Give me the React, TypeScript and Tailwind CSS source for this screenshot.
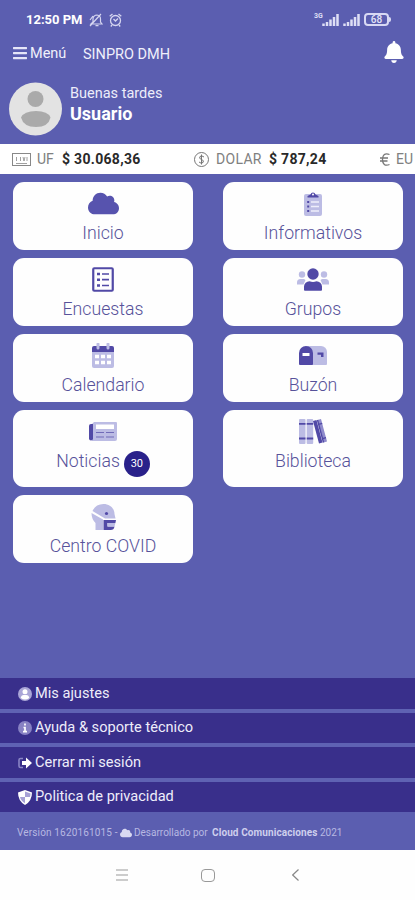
import React from "react";

import { FaBars, FaBell, FaCloud } from "react-icons/fa";

const DARK = "#5149a6";
const LIGHT = "#bcbce4";

const ClipboardIcon = () => (
  <svg width="18" height="25" viewBox="0 0 18 25">
    <rect x="0" y="3" width="18" height="22" rx="2" fill={LIGHT} />
    <path d="M3.500 6.500V5L6.500 3.500a2.600 2.600 0 0 1 5 0L14.500 5v1.500z" fill={DARK} />
    <circle cx="9" cy="3.400" r="1" fill="#fff" />
    <path d="M7 11h8M7 15.500h8M7 20h8" stroke="#eeeefa" strokeWidth="1.500" />
    <path d="M3.200 11h2M3.200 15.500h2M3.200 20h2" stroke={DARK} strokeWidth="2" />
  </svg>
);

const PollIcon = () => (
  <svg width="22" height="25" viewBox="0 0 22 25">
    <rect x="1.250" y="1.250" width="19.500" height="22.500" rx="1" fill="none" stroke={DARK} strokeWidth="2.200" />
    <path d="M5 7h3M5 12.700h3M5 18.500h3" stroke={DARK} strokeWidth="2.600" />
    <path d="M10 7h7M10 12.700h7M10 18.500h7" stroke={DARK} strokeWidth="1.700" />
  </svg>
);

const GroupIcon = () => (
  <svg width="32" height="23" viewBox="0 0 32 23">
    <g fill={LIGHT}>
      <circle cx="5" cy="6.500" r="3.200" />
      <circle cx="27" cy="6.500" r="3.200" />
      <path d="M0 16.500v-2A3.500 3.500 0 0 1 3.500 11H7l1.500 1-2 4.500zM32 16.500v-2a3.500 3.500 0 0 0-3.500-3.500H25l-1.500 1 2 4.500z" />
    </g>
    <circle cx="16" cy="6" r="5.700" fill={DARK} />
    <path d="M7 22v-3.500a5.500 5.500 0 0 1 5.500-5.300q3.500 1.500 7 0a5.500 5.500 0 0 1 5.500 5.300V22q0 .7-1 .7H8q-1 0-1-.7z" fill={DARK} />
  </svg>
);

const CalendarIcon = () => (
  <svg width="22" height="25" viewBox="0 0 22 25">
    <path d="M0 9h22v14a2 2 0 0 1-2 2H2a2 2 0 0 1-2-2z" fill={LIGHT} />
    <path d="M0 9V5a2 2 0 0 1 2-2h18a2 2 0 0 1 2 2v4z" fill={DARK} />
    <path d="M6 1v4M16 1v4" stroke={LIGHT} strokeWidth="3" strokeLinecap="round" />
    <path d="M3 13.500h4M9 13.500h4M15 13.500h4M3 19.500h4M9 19.500h4M15 19.500h4" stroke="#fff" strokeWidth="3.500" />
  </svg>
);

const MailboxIcon = () => (
  <svg width="28" height="19" viewBox="0 0 28 19">
    <path d="M8 0h14a6 6 0 0 1 6 6v12q0 1-1 1H12z" fill={LIGHT} />
    <path d="M7 0a7 7 0 0 1 7 7v11q0 1-1 1H1q-1 0-1-1V7a7 7 0 0 1 7-7z" fill={DARK} />
    <path d="M3.500 8.500h7" stroke="#fff" strokeWidth="3" />
    <path d="M18.500 6.500h6V11h-2.500V8.800h-3.500z" fill={DARK} />
  </svg>
);

const NewsIcon = () => (
  <svg width="28" height="19" viewBox="0 0 28 19">
    <path d="M5 0h22q1 0 1 1v16a2 2 0 0 1-2 2H3V2z" fill={LIGHT} />
    <path d="M4 2v14.500a2 2 0 0 1-4 0V4q0-2 2-2z" fill={DARK} />
    <path d="M7 2.500h18v4.500H7z" fill="#fff" />
    <path d="M7 10.500h8M17 10.500h8M7 15h8M17 15h8" stroke={DARK} strokeWidth="1.200" opacity=".7" />
  </svg>
);

const BooksIcon = () => (
  <svg width="28" height="25" viewBox="0 0 28 25">
    <rect x="0" y="0" width="6.500" height="25" rx="1" fill={LIGHT} />
    <rect x="7.700" y="0" width="6.500" height="25" rx="1" fill={LIGHT} />
    <path d="M0 4.800h6.500M0 19.500h6.500M7.700 4.800h6.500M7.700 19.500h6.500" stroke={DARK} strokeWidth="1.800" />
    <path d="M14 2l3.500-1L23.500 23.500 20 24.500z" fill={DARK} />
    <path d="M18.500 1L22 0l6 22.500-3.500 1z" fill="#8f8bcc" />
    <path d="M19.700 5.300l3.500-1M23.500 19.700l3.500-1M18.500 1l6 22.500" stroke={DARK} strokeWidth="1.400" />
  </svg>
);

const MaskIcon = () => (
  <svg width="25" height="26" viewBox="0 0 25 26">
    <path d="M1.500 7Q4.500 0 12.500 0C19 0 23.500 4.500 23.500 10l1 4.500H14z" fill={LIGHT} />
    <path d="M.500 9l11.500 6.500V26H4.500v-7Q.500 15 .500 9z" fill={LIGHT} />
    <circle cx="15.500" cy="9.500" r="1.600" fill={DARK} />
    <path d="M12.500 16H25l-.6 3H16.500v3.500h7Q23 26 19.500 26h-7z" fill={DARK} />
    <path d="M16.500 19h7.900l-.9 3.500h-7z" fill={LIGHT} />
  </svg>
);

const items = [
  { label: "Inicio", icon: <FaCloud size={31} color="#5753ae" /> },
  { label: "Informativos", icon: <ClipboardIcon /> },
  { label: "Encuestas", icon: <PollIcon /> },
  { label: "Grupos", icon: <GroupIcon /> },
  { label: "Calendario", icon: <CalendarIcon /> },
  { label: "Buzón", icon: <MailboxIcon /> },
  { label: "Noticias", icon: <NewsIcon />, badge: 30 },
  { label: "Biblioteca", icon: <BooksIcon /> },
  { label: "Centro COVID", icon: <MaskIcon /> },
];

const options = [
  {
    label: "Mis ajustes",
    icon: (
      <svg width="14" height="14" viewBox="0 0 14 14">
        <circle cx="7" cy="7" r="7" fill="#aaa6d7" />
        <circle cx="7" cy="4.800" r="2.500" fill="#fff" />
        <path d="M2.700 11q.5-3 3-3h2.600q2.500 0 3 3Q7 14 2.700 11z" fill="#fff" />
      </svg>
    ),
  },
  {
    label: "Ayuda & soporte técnico",
    icon: (
      <svg width="14" height="14" viewBox="0 0 14 14">
        <circle cx="7" cy="7" r="7" fill="#8882c3" />
        <path d="M7 2.500v2M5.500 6.500H7v4M5 10.700h4" stroke="#fff" strokeWidth="1.700" fill="none" />
      </svg>
    ),
  },
  {
    label: "Cerrar mi sesión",
    icon: (
      <svg width="14" height="12" viewBox="0 0 14 12">
        <path d="M5 1.500H2.500Q1 1.500 1 3v6q0 1.500 1.500 1.500H5" fill="none" stroke="#8984c5" strokeWidth="1.600" />
        <path d="M4 4h4V.500L14 6l-6 5.500V8H4z" fill="#fff" />
      </svg>
    ),
  },
  {
    label: "Politica de privacidad",
    icon: (
      <svg width="14" height="15" viewBox="0 0 14 15">
        <path d="M7 0l7 2.500Q14 11 7 15 0 11 0 2.500z" fill="#fff" />
        <path d="M7 1.500l5.500 2Q12.500 5.500 12 7H7zM7 7v6.300Q3 11 2 7z" fill="#a6a1d5" />
      </svg>
    ),
  },
];

function Signal() {
  return (
    <svg width="17" height="12" viewBox="0 0 17 12">
      <path d="M1.500 12V9.500M5 12V8M8.500 12V5.500M12 12V3M15.500 12V0" stroke="#dedff5" strokeWidth="2.500" />
    </svg>
  );
}

function StatusBar() {
  return (
    <div className="h-[39px] pl-[26px] pr-[24px] flex items-center justify-between">
      <div className="flex items-center">
        <span className="w-[57px] text-[13px] font-bold whitespace-nowrap">12:50 PM</span>
        <svg className="ml-[6px]" width="14" height="14" viewBox="0 0 14 14" fill="none" stroke="#d5d5f0" strokeWidth="1.200">
          <path d="M2 11h11l-1.500-2V6A4 4 0 0 0 8 2a4 4 0 0 0-4 4v3zM6.500 12.700h3M1 13L12 1M1 7l3-4" />
        </svg>
        <svg className="ml-[6px]" width="13" height="14" viewBox="0 0 13 14" fill="none" stroke="#d5d5f0" strokeWidth="1.300">
          <circle cx="6.500" cy="7.500" r="5" />
          <path d="M.700 3.200L3.500 1M12.300 3.200L9.500 1M4.500 6l2 2 2.500-2.500M3 12l-1.200 1.500M10 12l1.200 1.500" />
        </svg>
      </div>
      <div className="flex items-center">
        <div className="w-[8px] h-[14px] text-[7px] leading-[7px] font-bold text-[#dedff5]">3G</div>
        <Signal />
        <div className="ml-[4px]">
          <Signal />
        </div>
        <div className="ml-[4px] w-[25px] h-[13px] rounded-[4px] border-2 border-[#d8d9f4] flex items-center justify-center text-[10px] leading-none font-medium text-[#e5e5f8]">
          68
        </div>
        <div className="w-[2px] h-[5px] rounded-r bg-[#d8d9f4]" />
      </div>
    </div>
  );
}

function Header() {
  return (
    <>
      <div className="h-[28px] pl-[13px] pr-[11px] flex items-center">
        <FaBars className="w-[14px] h-[16px]" color="#e6e6f8" />
        <span className="ml-[3px] w-[53px] pt-px text-[14.500px] text-[#f0f0fb]">Menú</span>
        <span className="text-[14.500px] pt-[3px] text-[#f0f0fb]">SINPRO DMH</span>
        <FaBell className="ml-auto w-[20px] h-[22px] -mt-[2px]" />
      </div>

      <div className="h-[77px] pl-[9px] pt-[15px] flex">
        <svg width="54" height="54" viewBox="0 0 54 54">
          <circle cx="26.500" cy="27" r="26.500" fill="#e3e3e3" />
          <circle cx="26.500" cy="17" r="8" fill="#aaa" />
          <path d="M12 35.500q3-6.500 15-6.500t14.500 6.500q-2 9.500-14.500 9.500T12 35.500z" fill="#aaa" />
        </svg>
        <div className="ml-[7px] pt-[2px]">
          <p className="text-[14.500px] leading-[20px] text-[#ededfa]">Buenas tardes</p>
          <p className="text-[18px] leading-[20px] font-bold">Usuario</p>
        </div>
      </div>
    </>
  );
}

function Ticker() {
  return (
    <div className="h-[30px] bg-white flex items-center overflow-hidden whitespace-nowrap text-[14px] text-[#808080] pl-[12px] *:shrink-0">
      <svg width="19" height="13" viewBox="0 0 19 13" fill="none" stroke="#888">
        <rect x=".5" y=".5" width="18" height="12" />
        <path d="M4.500 4v4M8.500 4v4M11 4l1 4 1-4M15 4v4M4 10.500h11" strokeWidth=".8" />
      </svg>
      <span className="ml-[6px] w-[25px]">UF</span>
      <span className="w-[132px] font-bold tracking-[0.300px] text-[#292929]">$ 30.068,36</span>
      <svg width="15" height="15" viewBox="0 0 15 15" fill="none" stroke="#777">
        <circle cx="7.500" cy="7.500" r="7" />
        <path d="M10 5Q7.500 3 6 4.500 4.500 6.500 7.500 7.500T9 10.500Q7 12 5 10M7.500 2.500v10" />
      </svg>
      <span className="ml-[7px] w-[53px] tracking-[0.300px]">DOLAR</span>
      <span className="w-[111px] font-bold tracking-[0.300px] text-[#292929]">$ 787,24</span>
      <svg width="10" height="13" viewBox="0 0 10 13" fill="none" stroke="#777" strokeWidth="1.300">
        <path d="M9.500 1.500C5-.500 2.500 2 2.500 6.500s2.500 7 7 5M0 5h8M0 8h7.500" />
      </svg>
      <span className="ml-[6px]">EU</span>
    </div>
  );
}

function App() {
  return (
    <div className="w-full h-[900px] flex flex-col overflow-hidden bg-[#5b5eb0] text-white font-['Roboto',sans-serif]">
      <StatusBar />
      <Header />
      <Ticker />

      <div className="pl-[13px] pr-[12px] pt-[8px] grid grid-cols-2 grid-rows-[68px_68px_68px_77px_68px] gap-x-[30px] gap-y-[8px]">
        {items.map((item) => (
          <div key={item.label} className="bg-[#fefefe] rounded-[11px] flex flex-col items-center pt-[6px] text-[#57529a]">
            <div className="h-[31px] flex items-center justify-center">{item.icon}</div>
            <div className="flex items-center h-[28px] text-[17.700px] font-light">
              {item.label}
              {item.badge && (
                <span className="ml-[4px] mt-[6px] w-[26px] h-[26px] rounded-full bg-[#29218a] text-white text-[11px] font-normal flex items-center justify-center">
                  {item.badge}
                </span>
              )}
            </div>
          </div>
        ))}
      </div>

      <div className="mt-auto flex flex-col gap-y-[4px] bg-[#5f62b3]">
        {options.map((option) => (
          <div key={option.label} className="h-[30.500px] pl-[18px] pt-px bg-[#392f8b] flex items-center text-[14.600px] text-[#eeedfa]">
            <span className="w-[17px]">{option.icon}</span>
            {option.label}
          </div>
        ))}
      </div>

      <div className="h-[38px] pl-[17px] pt-[3px] flex items-center text-[10px] text-[#b7b8e2] whitespace-nowrap">
        <span className="w-[103px] tracking-[0.150px]">Versión 1620161015 -</span>
        <FaCloud className="w-[12px] h-[12px]" color="#d8d8f1" />
        <span className="ml-[2px] w-[78px]">Desarrollado por</span>
        <b className="w-[108px] text-[#cecfed] tracking-[0.100px]">Cloud Comunicaciones</b>
        <span>2021</span>
      </div>

      <div className="h-[50px] shrink-0 bg-[#fefefe] pl-[116px] flex items-center">
        <svg width="12" height="12" viewBox="0 0 12 12" stroke="#999" strokeWidth="1.200">
          <path d="M0 1h12M0 6h12M0 11h12" />
        </svg>
        <div className="ml-[73px] w-[14px] h-[13px] rounded-[4px] border border-[#999]" />
        <svg className="ml-[77px]" width="7" height="12" viewBox="0 0 7 12" fill="none" stroke="#888" strokeWidth="1.200">
          <path d="M6.500.500L.700 6l5.800 5.500" />
        </svg>
      </div>
    </div>
  );
}

export default App;
